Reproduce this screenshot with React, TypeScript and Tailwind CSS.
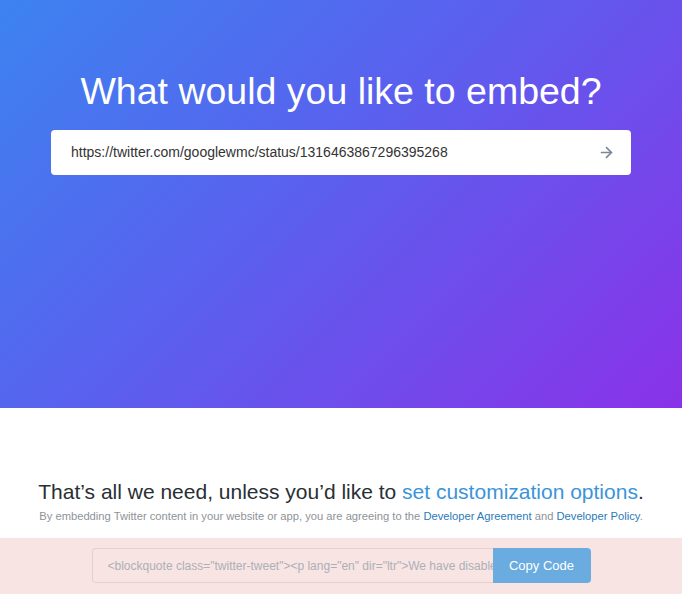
import React from 'react';
import { ArrowRight } from 'lucide-react';

const embedCode =
  '<blockquote class="twitter-tweet"><p lang="en" dir="ltr">We have disabled the ability to reply to this Tweet.</p>&mdash; Google Webmasters (@googlewmc)</blockquote>';

export default function App() {
  return (
    <div className="min-h-screen bg-white font-['Liberation_Sans',Arial,sans-serif]">
      <section className="h-[408px] bg-[linear-gradient(135deg,#3c83f0_0%,#5a60ee_45%,#8a32e8_100%)] pt-[69px] flex flex-col items-center">
        <h1 className="text-[37.5px] leading-[45px] text-white font-normal">What would you like to embed?</h1>
        <div className="mt-[16px] w-[580px] h-[45px] bg-white rounded-[4px] flex items-center pl-[20px] pr-[16px]">
          <input
            className="flex-1 text-[14px] text-[#333] outline-none bg-transparent"
            defaultValue="https://twitter.com/googlewmc/status/1316463867296395268"
          />
          <ArrowRight className="w-[17px] h-[17px] text-[#7d8894]" strokeWidth={2.4} />
        </div>
      </section>

      <section className="pt-[72px] pb-[15px] flex flex-col items-center">
        <p className="text-[21px] leading-[24px] text-[#292f33]">
          That’s all we need, unless you’d like to{' '}
          <a className="text-[#3b94d9]" href="#">set customization options</a>.
        </p>
        <p className="mt-[5px] text-[11.2px] leading-[14px] text-[#8e9398]">
          By embedding Twitter content in your website or app, you are agreeing to the{' '}
          <a className="text-[#2b7bb9]" href="#">Developer Agreement</a> and{' '}
          <a className="text-[#2b7bb9]" href="#">Developer Policy</a>.
        </p>
      </section>

      <section className="bg-[#f9e4e4] pt-[10px] pb-[20px] flex justify-center">
        <div className="w-[499px] h-[35px] flex">
          <input
            readOnly
            className="flex-1 min-w-0 h-full border border-[#e6cfcf] border-r-0 rounded-l-[4px] bg-[#f9e4e4] pl-[15px] pr-0 text-[12px] text-[#aab0b6] outline-none"
            value={embedCode}
          />
          <button className="w-[98px] h-full bg-[#6aabe0] rounded-r-[4px] text-white text-[13px]">Copy Code</button>
        </div>
      </section>
    </div>
  );
}
